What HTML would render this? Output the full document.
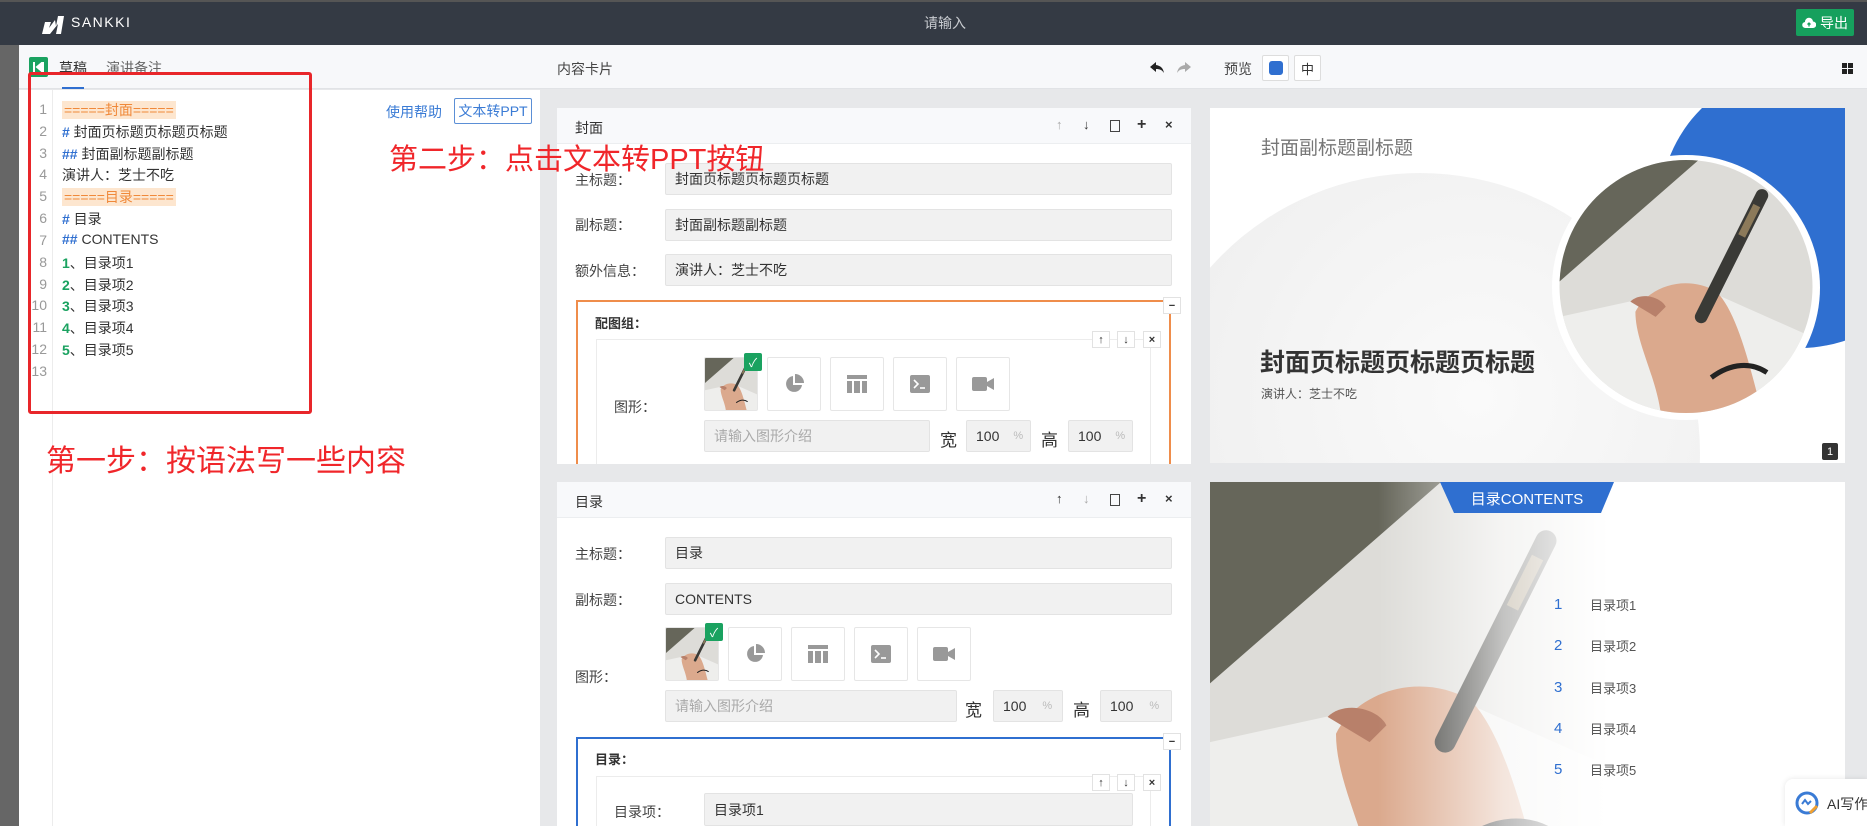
<!DOCTYPE html>
<html><head><meta charset="utf-8">
<style>
*{margin:0;padding:0;box-sizing:border-box}
html{width:1867px;height:826px;overflow:hidden}
body{width:1867px;height:826px;overflow:hidden;background:#e7e8ea;font-family:"Liberation Sans","Noto Sans CJK SC",sans-serif;color:#333;position:relative}
.a{position:absolute}
.top{left:0;top:0;width:1867px;height:45px;background:#343a44;border-top:2px solid #555}
.tb{left:19px;top:45px;width:1848px;height:44px;background:#f7f8fa;border-bottom:1px solid #e1e3e6}
.ln{position:absolute;left:20px;width:27px;text-align:right;color:#999;font-size:14px}
.tx{position:absolute;left:62px;font-size:14px;color:#333;white-space:nowrap}
.b{color:#2f6fd0;font-weight:bold}
.g{color:#1aa260;font-weight:bold}
.hl{background:#fde6cf;color:#f0893a;padding:1px 2px}
.card{background:#fff}
.hd{background:#f8f9fb;border-bottom:1px solid #eceef0}
.lbl{position:absolute;font-size:14px;color:#444}
.inp{position:absolute;background:#f1f1f1;border:1px solid #e3e3e3;border-radius:2px;font-size:14px;color:#333;padding-left:9px;display:flex;align-items:center}
.ic{position:absolute;font-size:13px;color:#333;font-weight:bold}
.th{position:absolute;width:54px;height:54px;background:#fff;border:1px solid #e6e6e6;border-radius:2px;display:flex;align-items:center;justify-content:center}
.sb{position:absolute;width:18px;height:17px;background:#fff;border:1px solid #e2e2e2;font-size:11px;display:flex;align-items:center;justify-content:center;color:#333;font-weight:bold}
.chk{position:absolute;width:18px;height:18px;background:#1aa260;border-radius:2px;color:#fff;font-size:12px;display:flex;align-items:center;justify-content:center}
</style></head><body>
<div class="a" style="left:0;top:0;width:19px;height:826px;background:#666"></div>
<div class="a top"></div>
<svg class="a" style="left:40px;top:14px" width="25" height="21" viewBox="0 0 25 21"><path d="M2 20 L5 8 L11 8 L9 14 L15 6 L16 12 L18 2 L24 2 L21 20 L16 20 L18 10 L10 20 Z" fill="#fff"/></svg>
<div class="a" style="left:71px;top:14px;color:#fff;font-size:14px;letter-spacing:1.5px">SANKKI</div>
<div class="a" style="left:924px;top:13px;color:#c9ccd1;font-size:14px">请输入</div>
<div class="a" style="left:1796px;top:9px;width:58px;height:27px;background:#16a05d;border-radius:2px;color:#fff;font-size:14px;display:flex;align-items:center;justify-content:center;gap:4px"><svg width="14" height="12" viewBox="0 0 14 12"><path d="M3.5 11 A3 3 0 0 1 3 5 A4 4 0 0 1 11 4.5 A3 3 0 0 1 11 11 Z" fill="#fff"/><path d="M7 9.5V6M5.5 7.5L7 6L8.5 7.5" stroke="#16a05d" stroke-width="1.3" fill="none"/></svg>导出</div>

<div class="a tb"></div>
<div class="a" style="left:29px;top:57px;width:19px;height:20px;background:#1aa260;border-radius:2px"></div>
<svg class="a" style="left:33px;top:62px" width="11" height="10"><path d="M1 0V10M10 0L4 5L10 10Z" stroke="#fff" stroke-width="2" fill="#fff"/></svg>
<div class="a" style="left:59px;top:58px;font-size:14px;color:#333">草稿</div>
<div class="a" style="left:62px;top:87px;width:22px;height:2px;background:#2f6fd0"></div>
<div class="a" style="left:106px;top:58px;font-size:14px;color:#666">演讲备注</div>
<div class="a" style="left:557px;top:59px;font-size:14px;color:#444">内容卡片</div>
<svg class="a" style="left:1149px;top:61px" width="16" height="14"><path d="M7 1L1 6L7 11V8C11 8 13 9 15 12C14 7 12 5 7 4Z" fill="#222"/></svg>
<svg class="a" style="left:1176px;top:61px" width="16" height="14"><path d="M9 1L15 6L9 11V8C5 8 3 9 1 12C2 7 4 5 9 4Z" fill="#aaa"/></svg>
<div class="a" style="left:1224px;top:59px;font-size:14px;color:#444">预览</div>
<div class="a" style="left:1262px;top:55px;width:27px;height:26px;background:#fff;border:1px solid #ddd;border-radius:2px"></div>
<div class="a" style="left:1269px;top:61px;width:14px;height:14px;background:#2f6fd0;border-radius:3px"></div>
<div class="a" style="left:1294px;top:55px;width:27px;height:26px;background:#fff;border:1px solid #ddd;border-radius:2px;font-size:13px;display:flex;align-items:center;justify-content:center">中</div>
<svg class="a" style="left:1842px;top:63px" width="11" height="11"><rect x="0" y="0" width="5" height="5" fill="#222"/><rect x="6" y="0" width="5" height="5" fill="#222"/><rect x="0" y="6" width="5" height="5" fill="#222"/><rect x="6" y="6" width="5" height="5" fill="#222"/></svg>

<!-- left editor -->
<div class="a" style="left:19px;top:90px;width:521px;height:736px;background:#fff"></div>
<div class="a" style="left:52px;top:90px;width:1px;height:736px;background:#ececec"></div>
<div class="ln" style="top:101px">1</div><div class="tx" style="top:100px"><span class="hl">=====封面=====</span></div>
<div class="ln" style="top:123px">2</div><div class="tx" style="top:122px"><span class="b">#</span> 封面页标题页标题页标题</div>
<div class="ln" style="top:145px">3</div><div class="tx" style="top:144px"><span class="b">##</span> 封面副标题副标题</div>
<div class="ln" style="top:166px">4</div><div class="tx" style="top:165px">演讲人：芝士不吃</div>
<div class="ln" style="top:188px">5</div><div class="tx" style="top:187px"><span class="hl">=====目录=====</span></div>
<div class="ln" style="top:210px">6</div><div class="tx" style="top:209px"><span class="b">#</span> 目录</div>
<div class="ln" style="top:232px">7</div><div class="tx" style="top:231px"><span class="b">##</span> CONTENTS</div>
<div class="ln" style="top:254px">8</div><div class="tx" style="top:253px"><span class="g">1</span>、目录项1</div>
<div class="ln" style="top:276px">9</div><div class="tx" style="top:275px"><span class="g">2</span>、目录项2</div>
<div class="ln" style="top:297px">10</div><div class="tx" style="top:296px"><span class="g">3</span>、目录项3</div>
<div class="ln" style="top:319px">11</div><div class="tx" style="top:318px"><span class="g">4</span>、目录项4</div>
<div class="ln" style="top:341px">12</div><div class="tx" style="top:340px"><span class="g">5</span>、目录项5</div>
<div class="ln" style="top:363px">13</div>
<div class="a" style="left:386px;top:102px;font-size:14px;color:#3a7bd5">使用帮助</div>
<div class="a" style="left:454px;top:98px;width:78px;height:26px;border:1px solid #5b8fd6;border-radius:2px;font-size:14px;color:#3a7bd5;display:flex;align-items:center;justify-content:center">文本转PPT</div>

<!-- card 1 -->
<div class="a card" style="left:557px;top:108px;width:634px;height:356px"></div>
<div class="a hd" style="left:557px;top:108px;width:634px;height:36px"></div>
<div class="a" style="left:575px;top:118px;font-size:14px">封面</div>
<div class="ic" style="left:1056px;top:117px;color:#aaa">↑</div><div class="ic" style="left:1083px;top:117px">↓</div>
<div class="a" style="left:1110px;top:120px;width:10px;height:12px;border:1.5px solid #444"></div>
<div class="ic" style="left:1137px;top:116px;font-size:16px">+</div><div class="ic" style="left:1165px;top:117px">×</div>
<div class="lbl" style="left:575px;top:170px">主标题：</div><div class="inp" style="left:665px;top:163px;width:507px;height:32px">封面页标题页标题页标题</div>
<div class="lbl" style="left:575px;top:215px">副标题：</div><div class="inp" style="left:665px;top:209px;width:507px;height:32px">封面副标题副标题</div>
<div class="lbl" style="left:575px;top:261px">额外信息：</div><div class="inp" style="left:665px;top:254px;width:507px;height:32px">演讲人：芝士不吃</div>
<div class="a" style="left:576px;top:300px;width:595px;height:164px;border:2px solid #ef8d4b;border-bottom:none"></div>
<div class="sb" style="left:1163px;top:297px">−</div>
<div class="a" style="left:595px;top:313px;font-size:13px;font-weight:bold">配图组：</div>
<div class="a" style="left:596px;top:339px;width:555px;height:125px;border:1px solid #ececec;border-bottom:none"></div>
<div class="sb" style="left:1092px;top:331px">↑</div><div class="sb" style="left:1117px;top:331px">↓</div><div class="sb" style="left:1143px;top:331px">×</div>
<div class="lbl" style="left:614px;top:397px">图形：</div>
<div class="th" style="left:704px;top:357px;overflow:hidden"><svg width="54" height="54" viewBox="0 0 100 100"><use href="#ph"/></svg></div>
<div class="chk" style="left:744px;top:353px">✓</div>
<div class="th" style="left:767px;top:357px"><svg width="20" height="20" viewBox="0 0 20 20"><path d="M9 2A8 8 0 1 0 18 11H9Z" fill="#999"/><path d="M11 0V9H20A9 9 0 0 0 11 0Z" fill="#999"/></svg></div>
<div class="th" style="left:830px;top:357px"><svg width="20" height="18"><rect x="0" y="0" width="20" height="4" fill="#999"/><rect x="0" y="6" width="5" height="12" fill="#999"/><rect x="7" y="6" width="6" height="12" fill="#999"/><rect x="15" y="6" width="5" height="12" fill="#999"/></svg></div>
<div class="th" style="left:893px;top:357px"><svg width="20" height="18"><rect width="20" height="18" rx="2" fill="#999"/><path d="M4 5L8 9L4 13" stroke="#fff" stroke-width="1.6" fill="none"/><path d="M10 13H15" stroke="#fff" stroke-width="1.6"/></svg></div>
<div class="th" style="left:956px;top:357px"><svg width="22" height="14"><rect width="15" height="14" rx="2" fill="#999"/><path d="M15 5L22 1V13L15 9Z" fill="#999"/></svg></div>
<div class="inp" style="left:704px;top:420px;width:226px;height:32px;color:#aaa">请输入图形介绍</div>
<div class="a" style="left:940px;top:426px;font-size:17px">宽</div>
<div class="inp" style="left:966px;top:420px;width:65px;height:32px">100<span style="color:#bbb;font-size:11px;margin-left:14px">%</span></div>
<div class="a" style="left:1041px;top:426px;font-size:17px">高</div>
<div class="inp" style="left:1068px;top:420px;width:65px;height:32px">100<span style="color:#bbb;font-size:11px;margin-left:14px">%</span></div>

<!-- card 2 -->
<div class="a card" style="left:557px;top:482px;width:634px;height:344px"></div>
<div class="a hd" style="left:557px;top:482px;width:634px;height:36px"></div>
<div class="a" style="left:575px;top:492px;font-size:14px">目录</div>
<div class="ic" style="left:1056px;top:491px">↑</div><div class="ic" style="left:1083px;top:491px;color:#aaa">↓</div>
<div class="a" style="left:1110px;top:494px;width:10px;height:12px;border:1.5px solid #444"></div>
<div class="ic" style="left:1137px;top:490px;font-size:16px">+</div><div class="ic" style="left:1165px;top:491px">×</div>
<div class="lbl" style="left:575px;top:544px">主标题：</div><div class="inp" style="left:665px;top:537px;width:507px;height:32px">目录</div>
<div class="lbl" style="left:575px;top:590px">副标题：</div><div class="inp" style="left:665px;top:583px;width:507px;height:32px">CONTENTS</div>
<div class="lbl" style="left:575px;top:667px">图形：</div>
<div class="th" style="left:665px;top:627px;overflow:hidden"><svg width="54" height="54" viewBox="0 0 100 100"><use href="#ph"/></svg></div>
<div class="chk" style="left:705px;top:623px">✓</div>
<div class="th" style="left:728px;top:627px"><svg width="20" height="20" viewBox="0 0 20 20"><path d="M9 2A8 8 0 1 0 18 11H9Z" fill="#999"/><path d="M11 0V9H20A9 9 0 0 0 11 0Z" fill="#999"/></svg></div>
<div class="th" style="left:791px;top:627px"><svg width="20" height="18"><rect x="0" y="0" width="20" height="4" fill="#999"/><rect x="0" y="6" width="5" height="12" fill="#999"/><rect x="7" y="6" width="6" height="12" fill="#999"/><rect x="15" y="6" width="5" height="12" fill="#999"/></svg></div>
<div class="th" style="left:854px;top:627px"><svg width="20" height="18"><rect width="20" height="18" rx="2" fill="#999"/><path d="M4 5L8 9L4 13" stroke="#fff" stroke-width="1.6" fill="none"/><path d="M10 13H15" stroke="#fff" stroke-width="1.6"/></svg></div>
<div class="th" style="left:917px;top:627px"><svg width="22" height="14"><rect width="15" height="14" rx="2" fill="#999"/><path d="M15 5L22 1V13L15 9Z" fill="#999"/></svg></div>
<div class="inp" style="left:665px;top:690px;width:292px;height:32px;color:#aaa">请输入图形介绍</div>
<div class="a" style="left:965px;top:696px;font-size:17px">宽</div>
<div class="inp" style="left:993px;top:690px;width:70px;height:32px">100<span style="color:#bbb;font-size:11px;margin-left:16px">%</span></div>
<div class="a" style="left:1073px;top:696px;font-size:17px">高</div>
<div class="inp" style="left:1100px;top:690px;width:72px;height:32px">100<span style="color:#bbb;font-size:11px;margin-left:16px">%</span></div>
<div class="a" style="left:576px;top:737px;width:595px;height:89px;border:2px solid #2f6fd0;border-bottom:none"></div>
<div class="sb" style="left:1163px;top:733px">−</div>
<div class="a" style="left:595px;top:749px;font-size:13px;font-weight:bold">目录：</div>
<div class="a" style="left:596px;top:776px;width:555px;height:50px;border:1px solid #ececec;border-bottom:none"></div>
<div class="sb" style="left:1092px;top:774px">↑</div><div class="sb" style="left:1117px;top:774px">↓</div><div class="sb" style="left:1143px;top:774px">×</div>
<div class="lbl" style="left:614px;top:802px">目录项：</div>
<div class="inp" style="left:704px;top:793px;width:429px;height:33px">目录项1</div>

<!-- preview 1 -->
<div class="a" style="left:1210px;top:108px;width:635px;height:355px;background:#fff;overflow:hidden">
 <div class="a" style="left:-70px;top:65px;width:560px;height:560px;border-radius:50%;background:radial-gradient(circle at 60% 40%,#fafafa,#efefef 70%,#f3f3f3)"></div>
 <div class="a" style="left:450px;top:-40px;width:280px;height:280px;border-radius:50%;background:#2f6fd0"></div>
 <div class="a" style="left:342px;top:47px;width:268px;height:265px;border-radius:50%;background:#fff"></div>
 <svg class="a" style="left:348px;top:52px" width="256" height="253" viewBox="0 0 100 100"><defs><clipPath id="cc"><ellipse cx="50" cy="50" rx="50" ry="50"/></clipPath></defs><g clip-path="url(#cc)"><use href="#ph"/></g></svg>
 <div class="a" style="left:51px;top:25px;font-size:19px;color:#777">封面副标题副标题</div>
 <div class="a" style="left:50px;top:235px;font-size:25px;color:#333;font-weight:bold">封面页标题页标题页标题</div>
 <div class="a" style="left:51px;top:277px;font-size:12px;color:#555">演讲人：芝士不吃</div>
 <div class="a" style="left:612px;top:335px;width:16px;height:17px;background:#333;color:#fff;font-size:11px;display:flex;align-items:center;justify-content:center;border-radius:2px">1</div>
</div>

<!-- preview 2 -->
<div class="a" style="left:1210px;top:482px;width:635px;height:344px;background:#fff;overflow:hidden">
 <svg class="a" style="left:0;top:0" width="420" height="344" viewBox="0 0 100 82" preserveAspectRatio="none"><use href="#ph"/></svg>
 <div class="a" style="left:0;top:0;width:420px;height:344px;background:linear-gradient(90deg,rgba(255,255,255,0) 40%,rgba(255,255,255,.7) 70%,#fff 95%)"></div>
 <svg class="a" style="left:230px;top:0" width="174" height="31"><path d="M0 0H174L161 31H14Z" fill="#2f6fd0"/></svg>
 <div class="a" style="left:230px;top:6px;width:174px;text-align:center;color:#fff;font-size:15px">目录CONTENTS</div>
 <div class="a" style="left:344px;top:102px;font-size:15px;color:#2f6fd0;line-height:41.3px">1<br>2<br>3<br>4<br>5</div>
 <div class="a" style="left:380px;top:103px;font-size:13px;color:#555;line-height:41.3px">目录项1<br>目录项2<br>目录项3<br>目录项4<br>目录项5</div>
</div>
<div class="a" style="left:1785px;top:779px;width:82px;height:47px;background:#fff;border-radius:8px 0 0 0;box-shadow:0 0 6px rgba(0,0,0,.1)"></div>
<svg class="a" style="left:1795px;top:791px" width="24" height="24"><circle cx="12" cy="12" r="10" fill="none" stroke="#3a7bd5" stroke-width="3"/><path d="M7 13L10 9L13 13L16 10" stroke="#3a7bd5" stroke-width="2" fill="none"/><path d="M15 22L22 15" stroke="#f0a030" stroke-width="3"/></svg>
<div class="a" style="left:1827px;top:794px;font-size:14px;color:#333;white-space:nowrap">AI写作</div>

<!-- annotations on top -->
<div class="a" style="left:28px;top:72px;width:284px;height:342px;border:3px solid #e8262a;border-radius:3px;z-index:5"></div>
<div class="a" style="left:389px;top:136px;font-size:29px;color:#f0262a;white-space:nowrap;z-index:5">第二步：点击文本转PPT按钮</div>
<div class="a" style="left:46px;top:436px;font-size:30px;color:#f0262a;white-space:nowrap;z-index:5">第一步：按语法写一些内容</div>

<svg width="0" height="0" style="position:absolute;left:0;top:0"><defs><g id="ph">
<rect width="100" height="100" fill="#dddcd8"/>
<path d="M0 0H55L0 48Z" fill="#66665a"/>
<path d="M0 62L55 50L100 70V100H0Z" fill="#eeeeec"/>
<path d="M30 60C35 50 50 45 62 52C70 60 75 80 80 100H40C38 85 30 72 30 60Z" fill="#dba98d"/>
<path d="M28 56C32 52 40 54 42 58L38 62Z" fill="#b8806a"/>
<path d="M80 14L56 62" stroke="#3a3a36" stroke-width="5" stroke-linecap="round"/>
<path d="M78 18L72 30" stroke="#8c7a5a" stroke-width="3"/>
<path d="M60 86C68 80 76 80 82 84" stroke="#222" stroke-width="2" fill="none"/>
</g></defs></svg>
</body></html>
